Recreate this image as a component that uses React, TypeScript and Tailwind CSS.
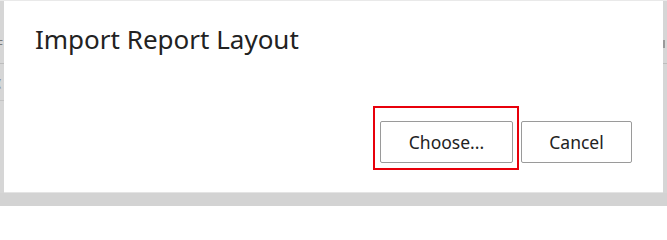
export default function App() {
  return (
    <div className="relative w-[667px] h-[206px] bg-[#d3d3d3] overflow-hidden font-['Segoe_UI','Noto_Sans',sans-serif] text-[#222222]">
      <div className="flex h-[193px] pt-px bg-[#e9e9e9]">
        {/* page behind the dialog, only a sliver shows */}
        <div className="w-[4px] bg-[#d6d6d6] overflow-hidden flex flex-col">
          <div className="h-[37px]" />
          <div className="text-[11px] leading-[12px] text-[#7a7a7a] -ml-[3px]">F</div>
          <div className="h-[13px]" />
          <div className="h-px bg-[#bdbdbd]" />
          <div className="h-[13px]" />
          <div className="text-[11px] leading-[12px] text-[#7a7a7a] -ml-[2px]">(</div>
          <div className="h-[11px]" />
          <div className="h-px bg-[#c4c4c4]" />
        </div>

        <div className="w-[659px] bg-white border-b border-[#e4e4e4] flex flex-col">
          <h2 className="pl-[31px] pt-[22px] text-[26px] leading-[32px] font-normal">
            Import Report Layout
          </h2>
          <div className="flex-1" />
          <div className="flex justify-end gap-2 pr-[31px] pb-[29px]">
            <button className="w-[133px] h-[42px] border border-[#9a9a9a] rounded-[2px] bg-white text-[17.5px]">
              Choose...
            </button>
            <button className="w-[111px] h-[42px] border border-[#9a9a9a] rounded-[2px] bg-white text-[17.5px]">
              Cancel
            </button>
          </div>
        </div>

        <div className="w-[4px] bg-[#d6d6d6] flex flex-col">
          <div className="h-[39px]" />
          <div className="h-[8px] w-[2px] bg-[#9a9a9a]" />
          <div className="h-[15px]" />
          <div className="h-px bg-[#bdbdbd]" />
        </div>
      </div>

      {/* focus highlight drawn over the Choose button */}
      <div className="absolute left-[373px] top-[106px] w-[146px] h-[64px] border-2 border-[#e8000b]" />
    </div>
  );
}
